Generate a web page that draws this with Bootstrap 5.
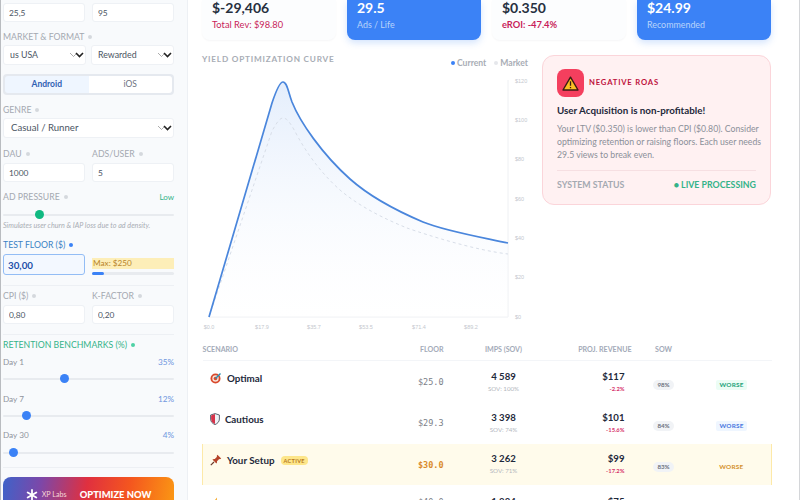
<!DOCTYPE html>
<html lang="en">
<head>
    <meta charset="UTF-8">
    <meta name="viewport" content="width=device-width, initial-scale=1.0">
    <title>Yield Optimizer</title>
    <link href="https://cdn.jsdelivr.net/npm/bootstrap@5.3.0/dist/css/bootstrap.min.css" rel="stylesheet">
    <style>
        html, body { height: 500px; overflow: hidden; }
        body { font-family: Lato, "Noto Sans", "Liberation Sans", sans-serif; background: #fff; color: #1e293b; }
        .app-shell { width: 800px; height: 500px; overflow: hidden; border-left: 1px solid #b9bcc0; border-right: 1px solid #d4d6d9; }
        .sp-5 { margin-top: 5px; }
        .sp-7 { margin-top: 7px; }
        .sp-8 { margin-top: 8px; }
        .sp-9 { margin-top: 9px; }
        .sp-10 { margin-top: 10px; }
        .sp-11 { margin-top: 11px; }
        /* sidebar */
        .side-panel { width: 187px; flex: none; padding: 3px 13px 0 2px; background: #f8fafc; border-right: 1px solid #edf0f4; }
        .two-up { display: flex; gap: 7px; }
        .two-up.tight { gap: 5px; }
        .fld-label { height: 10px; line-height: 10px; font-size: 8.7px; color: #a4a9b1; white-space: nowrap; margin-bottom: 3px; }
        .fld-label.gap-4 { margin-bottom: 4px; }
        .fld-label i { display: inline-block; width: 4px; height: 4px; border-radius: 50%; background: #d5d8dd; margin-left: 4px; vertical-align: 1px; }
        .fld-label.txt-blue { color: #3b82c4; }
        .fld-label.txt-blue i { background: #3b82f6; }
        .fld-label.txt-green { color: #34b389; }
        .fld-label.txt-green i { background: #4fd1a5; }
        .side-panel .form-control, .side-panel .form-select { height: 19px; min-height: 0; font-size: 8.4px; line-height: 1; color: #4b5563; padding: 0 5px; border: 1px solid #eef1f5; border-radius: 3px; background-color: #fff; box-shadow: none; }
        .side-panel .form-select { height: 20px; font-size: 8.8px; padding: 0 16px 0 6px; background-image: url("data:image/svg+xml,%3csvg xmlns='http://www.w3.org/2000/svg' viewBox='0 0 15 8'%3e%3cpath fill='none' stroke='%23888' stroke-width='.7' d='M1 2l3.5 3.5L8 2'/%3e%3cpath fill='none' stroke='%23222' stroke-width='1.6' d='M7 2l3.5 3.5L14 2'/%3e%3c/svg%3e"); background-position: right 1px center; background-size: 15px 8px; }
        .side-panel .genre-select { font-size: 9.6px; padding-left: 7px; }
        .side-panel .floor-input { height: 21px; font-size: 9.8px; font-weight: 700; color: #1d4fa8; border: 1px solid #93bdf5; background: #f3f8ff; padding: 0 4px; }
        .half-col { flex: 1 1 0; min-width: 0; }
        .os-toggle { height: 21px; margin-top: 9px; padding: 2px; background: #e5e9ef; border-radius: 4px; }
        .os-toggle span { flex: 1 1 0; font-size: 8.5px; line-height: 17px; text-align: center; color: #6b7280; background: #fff; border-radius: 0 3px 3px 0; }
        .os-toggle span.on { background: #eff6ff; color: #2f5fb3; font-weight: 700; border-radius: 3px 0 0 3px; }
        .side-panel .form-range { display: block; height: 9px; padding: 0; }
        .form-range::-webkit-slider-runnable-track { height: 2px; background: #e8ebef; border-radius: 1px; }
        .form-range::-webkit-slider-thumb { width: 9px; height: 9px; margin-top: -3.5px; background: #3b82f6; border: 0; box-shadow: none; }
        .form-range.thumb-green::-webkit-slider-thumb { background: #10b981; }
        .low-tag { font-size: 8px; color: #34b389; line-height: 10px; }
        .help-note { height: 9px; line-height: 9px; margin-top: 2px; font-size: 7.2px; font-style: italic; color: #a9adb4; white-space: nowrap; }
        .max-box { height: 11px; line-height: 11px; margin-top: 4px; padding-left: 1px; font-size: 8.2px; color: #b8842a; background: #fdeeb8; }
        .max-bar { height: 3px; margin-top: 3px; background: #e8ebef; border-radius: 2px; }
        .max-bar div { height: 3px; background: #3b82f6; border-radius: 2px; }
        .side-rule { height: 1px; margin-top: 10px; background: #edf0f4; }
        .day-row { height: 10px; line-height: 10px; font-size: 8.2px; color: #8f949c; }
        .day-row b { font-weight: 400; color: #6f96de; }
        .go-btn { height: 40px; margin-top: 9px; padding: 0 0 4px 0; border: 0; border-radius: 8px; color: #fff; background: linear-gradient(100deg, #3e63c9 0%, #7d47a8 22%, #e0303f 48%, #f4561f 72%, #fb9a13 100%); }
        .go-btn small { font-size: 7.2px; color: #f6d6d6; margin: 0 13px 0 4px; }
        .go-btn strong { font-size: 9.4px; font-weight: 900; }
        /* main */
        .main-area { flex: 1 1 0; min-width: 0; padding: 0 28px 0 14px; }
        .kpi-row { display: flex; gap: 11px; }
        .kpi-box { flex: 1 1 0; height: 40px; padding: 1px 10px 0; border-radius: 0 0 8px 8px; background: #fcfdfe; box-shadow: 0 1px 2px rgba(15, 23, 42, .04); }
        .kpi-box.kpi-blue { background: #3b82f6; color: #fff; box-shadow: 0 3px 7px rgba(59, 130, 246, .22); }
        .kpi-num { font-size: 14px; font-weight: 700; line-height: 14px; color: #27303f; }
        .kpi-blue .kpi-num { color: #fff; }
        .kpi-sub { font-size: 9.3px; line-height: 12px; margin-top: 4px; color: #c81e5a; }
        .kpi-sub.heavy { font-weight: 700; }
        .kpi-blue .kpi-sub { font-size: 8.9px; color: #b9d4fb; }
        .chart-col { width: 328px; flex: none; }
        .chart-title { font-size: 8.2px; font-weight: 700; letter-spacing: .8px; color: #a8adb5; line-height: 10px; padding-top: 14px; }
        .chart-legend { font-size: 8.6px; font-weight: 700; color: #a8adb5; line-height: 10px; padding: 18px 2px 0 0; }
        .chart-legend i { display: inline-block; width: 4px; height: 4px; border-radius: 50%; margin: 0 2px 0 8px; vertical-align: 1px; background: #e5e7eb; }
        .chart-legend i.dot-blue { background: #3b82f6; }
        .chart-svg { display: block; margin-top: 7px; }
        .chart-svg text { font-size: 5.5px; fill: #c4c8ce; font-family: "Liberation Sans", sans-serif; }
        .alert-panel { width: 229px; height: 150px; margin: 15px 0 0 12px; padding: 13px 14px 0; background: #fff1f2; border: 1px solid #fbd5da; border-radius: 12px; }
        .alert-icon { width: 27px; height: 28px; border-radius: 8px; background: #f43f5e; }
        .alert-tag { font-size: 7.7px; font-weight: 700; letter-spacing: .8px; color: #be123c; margin-left: 5px; }
        .alert-head { font-size: 9.8px; font-weight: 700; line-height: 14px; margin-top: 6px; color: #1e293b; white-space: nowrap; }
        .alert-text { font-size: 8.7px; line-height: 13px; margin: 5px 0 0; color: #8b9099; white-space: nowrap; }
        .alert-foot { margin-top: 9px; padding-top: 8px; border-top: 1px solid #f6dfe2; font-size: 8.8px; font-weight: 700; line-height: 11px; color: #a4a9b1; }
        .alert-foot span { color: #34b389; }
        /* table */
        .scen-table { table-layout: fixed; width: 569px; margin: 10px 0 0; --bs-table-bg: transparent; }
        .scen-table th { height: 15px; padding: 0 0 5px; font-size: 7.1px; font-weight: 700; line-height: 10px; color: #a3aab8; border-bottom: 1px solid #f3f5f8; }
        .scen-table td { height: 41.5px; padding: 0; vertical-align: middle; border: 0; }
        .w-scen { width: 193px; }
        .w-floor { width: 52px; }
        .w-imps { width: 112px; }
        .w-rev { width: 76px; }
        .w-sow { width: 56px; }
        .w-verdict { width: 80px; }
        .scen-name { font-size: 9.8px; font-weight: 700; color: #1e293b; padding: 0 0 7px 7px !important; white-space: nowrap; }
        .scen-name svg { vertical-align: -2px; margin-right: 3px; }
        .floor-val { font-family: "DejaVu Sans Mono", monospace; font-size: 8.5px; color: #7b8088; text-align: right; padding: 2px 4px 0 0 !important; }
        .floor-hd { text-align: right; padding-right: 4px !important; }
        .imps-val, .rev-val { font-size: 9.6px; font-weight: 700; line-height: 12px; color: #1e293b; }
        .imps-sub { font-size: 6.2px; line-height: 9px; margin-top: 1px; color: #b3b7bd; }
        .rev-sub { font-size: 5.8px; line-height: 9px; margin-top: 1px; font-weight: 700; color: #d6336c; }
        .rev-cell { text-align: right; padding-right: 11px !important; }
        .rev-hd { text-align: right; padding-right: 4px !important; }
        .pill-cell { text-align: center; padding-bottom: 2px !important; }
        .sow-pill { display: inline-block; padding: 0 4px; font-size: 6.2px; font-weight: 700; line-height: 10px; color: #6b7280; background: #f1f3f6; border-radius: 5px; }
        .verdict { display: inline-block; padding: 0 3px; font-size: 6.4px; font-weight: 700; line-height: 10px; letter-spacing: .2px; border-radius: 2px; }
        .v-green { color: #22a37a; background: #ecfdf5; }
        .v-blue { color: #4a78e0; background: #eff6ff; }
        .v-amber { color: #d4912b; }
        .setup-row td { background: #fffbeb; }
        .setup-row td:first-child { border-left: 1px solid #fde9a8; }
        .setup-row td:last-child { border-right: 1px solid #fde9a8; }
        .setup-row .floor-val { color: #d98a2b; font-weight: 700; }
        .active-tag { display: inline-block; margin-left: 6px; padding: 0 3px; font-size: 5.6px; font-weight: 700; line-height: 9px; letter-spacing: .3px; color: #b7791f; background: #fde68a; border-radius: 4px; vertical-align: 1px; }
        .tail-row td { vertical-align: top; padding-top: 11px !important; }
    </style>
</head>
<body>
<div class="app-shell d-flex">

    <!-- Sidebar -->
    <aside class="side-panel">
        <div class="two-up">
            <div class="half-col"><input class="form-control" type="text" value="25,5"></div>
            <div class="half-col"><input class="form-control" type="text" value="95"></div>
        </div>

        <div class="fld-label sp-10">MARKET &amp; FORMAT<i></i></div>
        <div class="two-up tight">
            <div class="half-col"><select class="form-select"><option>us USA</option></select></div>
            <div class="half-col"><select class="form-select"><option>Rewarded</option></select></div>
        </div>

        <div class="os-toggle d-flex">
            <span class="on">Android</span>
            <span>iOS</span>
        </div>

        <div class="fld-label sp-10">GENRE<i></i></div>
        <select class="form-select genre-select"><option>Casual / Runner</option></select>

        <div class="two-up sp-11">
            <div class="half-col">
                <div class="fld-label gap-4">DAU<i></i></div>
                <input class="form-control" type="text" value="1000">
            </div>
            <div class="half-col">
                <div class="fld-label gap-4">ADS/USER<i></i></div>
                <input class="form-control" type="text" value="5">
            </div>
        </div>

        <div class="d-flex justify-content-between sp-10">
            <div class="fld-label mb-0">AD PRESSURE<i></i></div>
            <span class="low-tag">Low</span>
        </div>
        <input class="form-range thumb-green sp-8" type="range" min="0" max="100" value="20">
        <div class="help-note">Simulates user churn &amp; IAP loss due to ad density.</div>

        <div class="fld-label gap-4 txt-blue sp-10">TEST FLOOR ($)<i></i></div>
        <div class="two-up">
            <div class="half-col"><input class="form-control floor-input" type="text" value="30,00"></div>
            <div class="half-col">
                <div class="max-box">Max: $250</div>
                <div class="max-bar"><div style="width:15%"></div></div>
            </div>
        </div>

        <div class="side-rule"></div>

        <div class="two-up sp-5">
            <div class="half-col">
                <div class="fld-label gap-4">CPI ($)<i></i></div>
                <input class="form-control" type="text" value="0,80">
            </div>
            <div class="half-col">
                <div class="fld-label gap-4">K-FACTOR<i></i></div>
                <input class="form-control" type="text" value="0,20">
            </div>
        </div>

        <div class="side-rule"></div>

        <div class="fld-label txt-green mb-0 sp-5">RETENTION BENCHMARKS (%)<i></i></div>

        <div class="day-row d-flex justify-content-between sp-7"><span>Day 1</span><b>35%</b></div>
        <input class="form-range sp-7" type="range" min="0" max="100" value="35">
        <div class="day-row d-flex justify-content-between sp-11"><span>Day 7</span><b>12%</b></div>
        <input class="form-range sp-7" type="range" min="0" max="100" value="12">
        <div class="day-row d-flex justify-content-between sp-10"><span>Day 30</span><b>4%</b></div>
        <input class="form-range sp-8" type="range" min="0" max="100" value="4">

        <div class="side-rule"></div>

        <button class="go-btn btn w-100 d-flex align-items-center justify-content-center" type="button">
            <svg width="12" height="12" viewBox="0 0 12 12" stroke="#fff" stroke-width="1.8" stroke-linecap="round"><path d="M6 1v10M1.7 3.5l8.6 5M1.7 8.5l8.6-5"/></svg>
            <small>XP Labs</small>
            <strong>OPTIMIZE NOW</strong>
        </button>
    </aside>

    <!-- Main -->
    <main class="main-area">
        <div class="kpi-row">
            <div class="kpi-box">
                <div class="kpi-num">$-29,406</div>
                <div class="kpi-sub">Total Rev: $98.80</div>
            </div>
            <div class="kpi-box kpi-blue">
                <div class="kpi-num">29.5</div>
                <div class="kpi-sub">Ads / Life</div>
            </div>
            <div class="kpi-box">
                <div class="kpi-num">$0.350</div>
                <div class="kpi-sub heavy">eROI: -47.4%</div>
            </div>
            <div class="kpi-box kpi-blue">
                <div class="kpi-num">$24.99</div>
                <div class="kpi-sub">Recommended</div>
            </div>
        </div>

        <div class="d-flex">
            <div class="chart-col">
                <div class="d-flex justify-content-between">
                    <div class="chart-title">YIELD OPTIMIZATION CURVE</div>
                    <div class="chart-legend"><i class="dot-blue"></i>Current<i></i>Market</div>
                </div>
                <svg class="chart-svg" width="328" height="260" viewBox="202 75 328 260">
                    <defs>
                        <linearGradient id="areaFill" x1="0" y1="0" x2="0" y2="1">
                            <stop offset="0" stop-color="#dbe8fb" stop-opacity=".75"/>
                            <stop offset="1" stop-color="#ffffff" stop-opacity=".2"/>
                        </linearGradient>
                    </defs>
                    <path d="M508 80V317H209" fill="none" stroke="#eef0f3" stroke-width="1"/>
                    <path d="M209 317L272 103C277 88 280 82 283 82C287 82 288 91 292 102C300 122 322 154 350 179C368 195 390 208 423 222C445 231 480 237 508 243V317Z" fill="url(#areaFill)"/>
                    <path d="M209 317L272 131C277 122 280 118 283 118C288 118 292 126 298 137C308 155 322 174 340 190C360 207 385 219 407 228C430 236 475 250 508 254" fill="none" stroke="#d8dee8" stroke-width="1" stroke-dasharray="3 3"/>
                    <path d="M209 317L272 103C277 88 280 82 283 82C287 82 288 91 292 102C300 122 322 154 350 179C368 195 390 208 423 222C445 231 480 237 508 243" fill="none" stroke="#4a86dc" stroke-width="1.7" stroke-linejoin="round"/>
                    <text x="515" y="83">$120</text>
                    <text x="515" y="122">$100</text>
                    <text x="515" y="161">$80</text>
                    <text x="515" y="201">$60</text>
                    <text x="515" y="240">$40</text>
                    <text x="515" y="279">$20</text>
                    <text x="515" y="319">$0</text>
                    <text x="209" y="329" text-anchor="middle">$0.0</text>
                    <text x="262" y="329" text-anchor="middle">$17.9</text>
                    <text x="314" y="329" text-anchor="middle">$35.7</text>
                    <text x="366" y="329" text-anchor="middle">$53.5</text>
                    <text x="419" y="329" text-anchor="middle">$71.4</text>
                    <text x="471" y="329" text-anchor="middle">$89.2</text>
                </svg>
            </div>

            <div class="alert-panel">
                <div class="d-flex align-items-center">
                    <div class="alert-icon d-flex align-items-center justify-content-center">
                        <svg width="17" height="15" viewBox="0 0 17 15"><path d="M8.5 1.2L16 14H1Z" fill="#fbbf24" stroke="#3b1d12" stroke-width="1.4" stroke-linejoin="round"/><path d="M8.5 5.2v4.6M8.5 11v1.3" stroke="#3b1d12" stroke-width="1.3"/></svg>
                    </div>
                    <span class="alert-tag">NEGATIVE ROAS</span>
                </div>
                <div class="alert-head">User Acquisition is non-profitable!</div>
                <p class="alert-text">Your LTV ($0.350) is lower than CPI ($0.80). Consider<br>optimizing retention or raising floors. Each user needs<br>29.5 views to break even.</p>
                <div class="alert-foot d-flex justify-content-between">
                    SYSTEM STATUS
                    <span>&#9679; LIVE PROCESSING</span>
                </div>
            </div>
        </div>

        <table class="table scen-table">
            <colgroup>
                <col class="w-scen"><col class="w-floor"><col class="w-imps"><col class="w-rev"><col class="w-sow"><col class="w-verdict">
            </colgroup>
            <thead>
                <tr>
                    <th>SCENARIO</th>
                    <th class="floor-hd">FLOOR</th>
                    <th class="text-center">IMPS (SOV)</th>
                    <th class="rev-hd">PROJ. REVENUE</th>
                    <th class="text-center">SOW</th>
                    <th></th>
                </tr>
            </thead>
            <tbody>
                <tr>
                    <td class="scen-name">
                        <svg width="12" height="12" viewBox="0 0 12 12"><circle cx="5.5" cy="6.5" r="5" fill="#d9482b"/><circle cx="5.5" cy="6.5" r="3.2" fill="#f7e3d8"/><circle cx="5.5" cy="6.5" r="1.8" fill="#d9482b"/><path d="M5.5 6.5L10.5 1.5" stroke="#2b8fb3" stroke-width="1.5"/></svg>
                        Optimal
                    </td>
                    <td class="floor-val">$25.0</td>
                    <td class="text-center"><div class="imps-val">4 589</div><div class="imps-sub">SOV: 100%</div></td>
                    <td class="rev-cell"><div class="rev-val">$117</div><div class="rev-sub">-2.2%</div></td>
                    <td class="pill-cell"><span class="sow-pill">98%</span></td>
                    <td class="pill-cell"><span class="verdict v-green">WORSE</span></td>
                </tr>
                <tr>
                    <td class="scen-name">
                        <svg width="10" height="12" viewBox="0 0 10 12"><path d="M5 .6L9.4 2v4C9.4 8.8 7.4 10.6 5 11.6 2.6 10.6.6 8.8.6 6V2Z" fill="#eef1f5" stroke="#4b5563" stroke-width=".9"/><path d="M5 1.1V11C3 10.2 1.1 8.6 1.1 6V2.4Z" fill="#d6334a"/></svg>
                        Cautious
                    </td>
                    <td class="floor-val">$29.3</td>
                    <td class="text-center"><div class="imps-val">3 398</div><div class="imps-sub">SOV: 74%</div></td>
                    <td class="rev-cell"><div class="rev-val">$101</div><div class="rev-sub">-15.6%</div></td>
                    <td class="pill-cell"><span class="sow-pill">84%</span></td>
                    <td class="pill-cell"><span class="verdict v-blue">WORSE</span></td>
                </tr>
                <tr class="setup-row">
                    <td class="scen-name">
                        <svg width="12" height="12" viewBox="0 0 12 12"><path d="M7.4.8l3.8 3.8-1.3.7-.7-.3L7 7.2c.2 1 0 1.8-.6 2.4L2.4 5.6C3 5 3.8 4.8 4.8 5l2.2-2.2-.3-.7Z" fill="#b5432a"/><path d="M4 8L.8 11.2" stroke="#6b3a2a" stroke-width="1.2"/></svg>
                        Your Setup<span class="active-tag">ACTIVE</span>
                    </td>
                    <td class="floor-val">$30.0</td>
                    <td class="text-center"><div class="imps-val">3 262</div><div class="imps-sub">SOV: 71%</div></td>
                    <td class="rev-cell"><div class="rev-val">$99</div><div class="rev-sub">-17.2%</div></td>
                    <td class="pill-cell"><span class="sow-pill">83%</span></td>
                    <td class="pill-cell"><span class="verdict v-amber">WORSE</span></td>
                </tr>
                <tr class="tail-row">
                    <td class="scen-name">
                        <svg width="12" height="12" viewBox="0 0 12 12"><path d="M7 .5L2 7h3l-1 4.5L10 5H6.5Z" fill="#f59e0b"/></svg>
                        Aggressive
                    </td>
                    <td class="floor-val">$40.0</td>
                    <td class="text-center"><div class="imps-val">1 884</div><div class="imps-sub">SOV: 41%</div></td>
                    <td class="rev-cell"><div class="rev-val">$75</div><div class="rev-sub">-37.2%</div></td>
                    <td class="pill-cell"><span class="sow-pill">63%</span></td>
                    <td class="pill-cell"><span class="verdict v-amber">WORSE</span></td>
                </tr>
            </tbody>
        </table>
    </main>
</div>
<script src="https://cdn.jsdelivr.net/npm/bootstrap@5.3.0/dist/js/bootstrap.bundle.min.js"></script>
</body>
</html>
